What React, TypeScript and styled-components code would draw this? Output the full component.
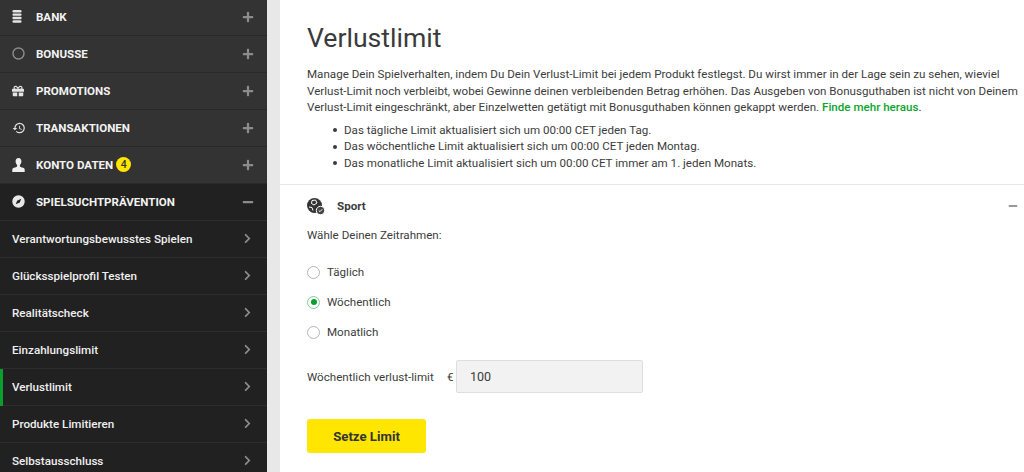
import styled, { createGlobalStyle } from 'styled-components';
import { FaChevronRight, FaGift, FaPlus, FaMinus } from 'react-icons/fa';
import { MdHistory } from 'react-icons/md';

const GlobalStyle = createGlobalStyle`
    html, body {
        margin: 0;
        height: 100%;
        overflow: hidden;
        background: white;
    }
    body {
        font-family: Roboto, "Liberation Sans", sans-serif;
    }
`;

const Page = styled.div`
    display: flex;
    width: 1024px;
    height: 472px;
    overflow: hidden;
`;

const Sidebar = styled.nav`
    flex: 0 0 267px;
    display: flex;
    flex-direction: column;
    background: #212121;
    margin-top: -1px;
`;

const Gutter = styled.div`
    flex: 0 0 13px;
    background: #e8e8e8;
`;

const MenuRow = styled.div<{ $open?: boolean; $active?: boolean }>`
    flex: 0 0 37px;
    box-sizing: border-box;
    display: flex;
    align-items: center;
    padding: 0 13px 1px 12px;
    background: ${(p) => (p.$open ? '#212121' : '#333333')};
    border-bottom: 1px solid ${(p) => (p.$open ? '#2d2d2d' : '#292929')};
    position: relative;
    color: white;
`;

const IconSlot = styled.span`
    flex: 0 0 24px;
    display: flex;
    align-items: center;
    color: #e4e4e4;
`;

const TopLabel = styled.span`
    font-size: 11.55px;
    font-weight: 700;
    color: #f2f2f2;
`;

const Badge = styled.span`
    width: 15px;
    height: 15px;
    margin-left: 3px;
    border-radius: 50%;
    background: #ffe600;
    color: #333;
    font-size: 10.5px;
    font-weight: 500;
    display: flex;
    align-items: center;
    justify-content: center;
`;

const SubLabel = styled.span`
    font-size: 11.65px;
    font-weight: 500;
    color: #efefef;
`;

const ActiveMark = styled.span`
    position: absolute;
    left: 0;
    top: 0;
    bottom: -1px;
    width: 3px;
    background: #0a9e2c;
`;

const RowEnd = styled.span<{ $chevron?: boolean }>`
    margin-left: auto;
    margin-right: ${(p) => (p.$chevron ? '1px' : '0')};
    display: flex;
    align-items: center;
    color: #8c8c8c;
`;

const Main = styled.main`
    flex: 1;
    min-width: 0;
    color: #3c3c3c;
    font-size: 11.6px;
`;

const Intro = styled.section`
    padding: 20px 4px 0 27px;
    height: 185px;
    box-sizing: border-box;
    border-bottom: 1px solid #e6e6e6;
`;

const Title = styled.h1`
    margin: 0 0 10px;
    font-size: 26.6px;
    line-height: 36px;
    font-weight: 400;
    color: #3a3a3a;
`;

const Paragraph = styled.p`
    margin: 0;
    line-height: 16.6px;
`;

const MoreLink = styled.a`
    color: #0aa52c;
    font-weight: 500;
`;

const Rules = styled.ul`
    margin: 6px 0 0;
    padding: 0 0 0 26px;
    line-height: 16.6px;
    list-style: none;
`;

const Rule = styled.li`
    display: flex;
    align-items: center;
    gap: 7px;
    &::before {
        content: '';
        width: 4px;
        height: 4px;
        border-radius: 50%;
        background: #3c3c3c;
    }
`;

const Form = styled.section`
    padding: 0 6px 0 27px;
`;

const SportHeader = styled.div`
    height: 42px;
    display: flex;
    align-items: center;
    gap: 12px;
    font-weight: 700;
    color: #3c3c3c;
`;

const Collapse = styled.span`
    margin-left: auto;
    display: flex;
    color: #999;
`;

const Prompt = styled.p`
    margin: 0 0 21px;
    line-height: 16px;
`;

const Choices = styled.div`
    display: flex;
    flex-direction: column;
    gap: 14px;
    margin-bottom: 20px;
`;

const Choice = styled.label`
    display: flex;
    align-items: center;
    gap: 7px;
    height: 16px;
`;

const RadioMark = styled.span<{ $checked?: boolean }>`
    width: 13px;
    height: 13px;
    box-sizing: border-box;
    border-radius: 50%;
    border: 1px solid ${(p) => (p.$checked ? '#7fcba0' : '#b5b5b5')};
    background: white;
    display: flex;
    align-items: center;
    justify-content: center;
    &::after {
        content: '';
        display: ${(p) => (p.$checked ? 'block' : 'none')};
        width: 6px;
        height: 6px;
        border-radius: 50%;
        background: #0a9e2c;
    }
`;

const LimitRow = styled.div`
    display: flex;
    align-items: center;
`;

const LimitLabel = styled.label`
    width: 140px;
`;

const Currency = styled.span`
    width: 9px;
`;

const Amount = styled.input`
    width: 187px;
    height: 33px;
    box-sizing: border-box;
    padding: 0 13px;
    border: 1px solid #dedede;
    border-radius: 2px;
    background: #f2f2f2;
    color: #3c3c3c;
    font: 400 12.5px Roboto, sans-serif;
`;

const Submit = styled.button`
    display: block;
    margin-top: 26px;
    width: 119px;
    height: 34px;
    border: 0;
    border-radius: 3px;
    background: #ffe600;
    color: #333;
    font: 700 13.2px Roboto, sans-serif;
`;

const CoinsIcon = () => (
    <svg width="10" height="13" viewBox="0 0 10 13" fill="#e4e4e4">
        <rect x="0.5" y="0" width="9" height="2.4" rx="1.2" />
        <rect x="0.5" y="3.4" width="9" height="2.4" rx="0.8" />
        <rect x="0.5" y="6.8" width="9" height="2.4" rx="0.8" />
        <rect x="0.5" y="10.2" width="9" height="2.6" rx="1.2" />
    </svg>
);

const RingIcon = () => (
    <svg width="13" height="13" viewBox="0 0 13 13" fill="none" stroke="#8c8c8c" strokeWidth="1.4">
        <circle cx="6.5" cy="6.5" r="5.5" />
    </svg>
);

const PersonIcon = () => (
    <svg width="13" height="14" viewBox="0 0 13 14" fill="#efefef">
        <path d="M6.5 0C8.4 0 9.4 1.4 9.4 3.3c0 1.6-.7 3-1.5 3.7v1.2c0 .6 1.4 1 3.2 1.6.9.3 1.6.9 1.6 2V14H.3v-2.2c0-1.1.7-1.7 1.6-2 1.8-.6 3.2-1 3.2-1.6V7c-.8-.7-1.5-2.1-1.5-3.7C3.6 1.4 4.6 0 6.5 0z" />
    </svg>
);

const BadgeCheckIcon = () => (
    <svg width="13" height="13" viewBox="0 0 13 13">
        <circle cx="6.5" cy="6.5" r="6.2" fill="#e8e8e8" />
        <path d="M3.8 9.2l1.3-3.4 4.1-2-1.4 3.8z" fill="#212121" />
    </svg>
);

const SportIcon = () => (
    <svg width="18" height="17" viewBox="0 0 18 17">
        <circle cx="7.5" cy="7.5" r="7.5" fill="#333" />
        <path d="M5 2.5l3.5-.5 1.5 3-3 2-2.5-1.5zM2 9l3 .5 1 3" fill="none" stroke="white" strokeWidth="1" />
        <circle cx="13.5" cy="12.5" r="4.2" fill="#444" stroke="white" strokeWidth="1" />
        <path d="M11.8 12.5l1.2 1.2 2.2-2.4" fill="none" stroke="white" strokeWidth="1" />
    </svg>
);

const topItems = [
    { label: 'BANK', icon: <CoinsIcon /> },
    { label: 'BONUSSE', icon: <RingIcon /> },
    { label: 'PROMOTIONS', icon: <FaGift size={12} /> },
    { label: 'TRANSAKTIONEN', icon: <MdHistory size={14} /> },
    { label: 'KONTO DATEN', icon: <PersonIcon />, badge: 4 },
];

const subItems = [
    'Verantwortungsbewusstes Spielen',
    'Glücksspielprofil Testen',
    'Realitätscheck',
    'Einzahlungslimit',
    'Verlustlimit',
    'Produkte Limitieren',
    'Selbstausschluss',
];

const choices = ['Täglich', 'Wöchentlich', 'Monatlich'];

const App = () => {
    return (
        <Page>
            <GlobalStyle />
            <Sidebar>
                {topItems.map((item) => (
                    <MenuRow key={item.label}>
                        <IconSlot>{item.icon}</IconSlot>
                        <TopLabel>{item.label}</TopLabel>
                        {item.badge && <Badge>{item.badge}</Badge>}
                        <RowEnd>
                            <FaPlus size={12} />
                        </RowEnd>
                    </MenuRow>
                ))}
                <MenuRow $open>
                    <IconSlot>
                        <BadgeCheckIcon />
                    </IconSlot>
                    <TopLabel>SPIELSUCHTPRÄVENTION</TopLabel>
                    <RowEnd>
                        <FaMinus size={12} />
                    </RowEnd>
                </MenuRow>
                {subItems.map((item) => (
                    <MenuRow $open key={item}>
                        {item === 'Verlustlimit' && <ActiveMark />}
                        <SubLabel>{item}</SubLabel>
                        <RowEnd $chevron>
                            <FaChevronRight size={11} />
                        </RowEnd>
                    </MenuRow>
                ))}
            </Sidebar>
            <Gutter />
            <Main>
                <Intro>
                    <Title>Verlustlimit</Title>
                    <Paragraph>
                        Manage Dein Spielverhalten, indem Du Dein Verlust-Limit bei jedem Produkt festlegst. Du wirst
                        immer in der Lage sein zu sehen, wieviel Verlust-Limit noch verbleibt, wobei Gewinne deinen
                        verbleibenden Betrag erhöhen. Das Ausgeben von Bonusguthaben ist nicht von Deinem Verlust-Limit
                        eingeschränkt, aber Einzelwetten getätigt mit Bonusguthaben können gekappt werden.{' '}
                        <MoreLink>Finde mehr heraus</MoreLink>.
                    </Paragraph>
                    <Rules>
                        <Rule>Das tägliche Limit aktualisiert sich um 00:00 CET jeden Tag.</Rule>
                        <Rule>Das wöchentliche Limit aktualisiert sich um 00:00 CET jeden Montag.</Rule>
                        <Rule>Das monatliche Limit aktualisiert sich um 00:00 CET immer am 1. jeden Monats.</Rule>
                    </Rules>
                </Intro>
                <Form>
                    <SportHeader>
                        <SportIcon />
                        Sport
                        <Collapse>
                            <FaMinus size={10} />
                        </Collapse>
                    </SportHeader>
                    <Prompt>Wähle Deinen Zeitrahmen:</Prompt>
                    <Choices>
                        {choices.map((choice) => (
                            <Choice key={choice}>
                                <RadioMark $checked={choice === 'Wöchentlich'} />
                                {choice}
                            </Choice>
                        ))}
                    </Choices>
                    <LimitRow>
                        <LimitLabel>Wöchentlich verlust-limit</LimitLabel>
                        <Currency>€</Currency>
                        <Amount defaultValue="100" />
                    </LimitRow>
                    <Submit>Setze Limit</Submit>
                </Form>
            </Main>
        </Page>
    );
};

export default App;
